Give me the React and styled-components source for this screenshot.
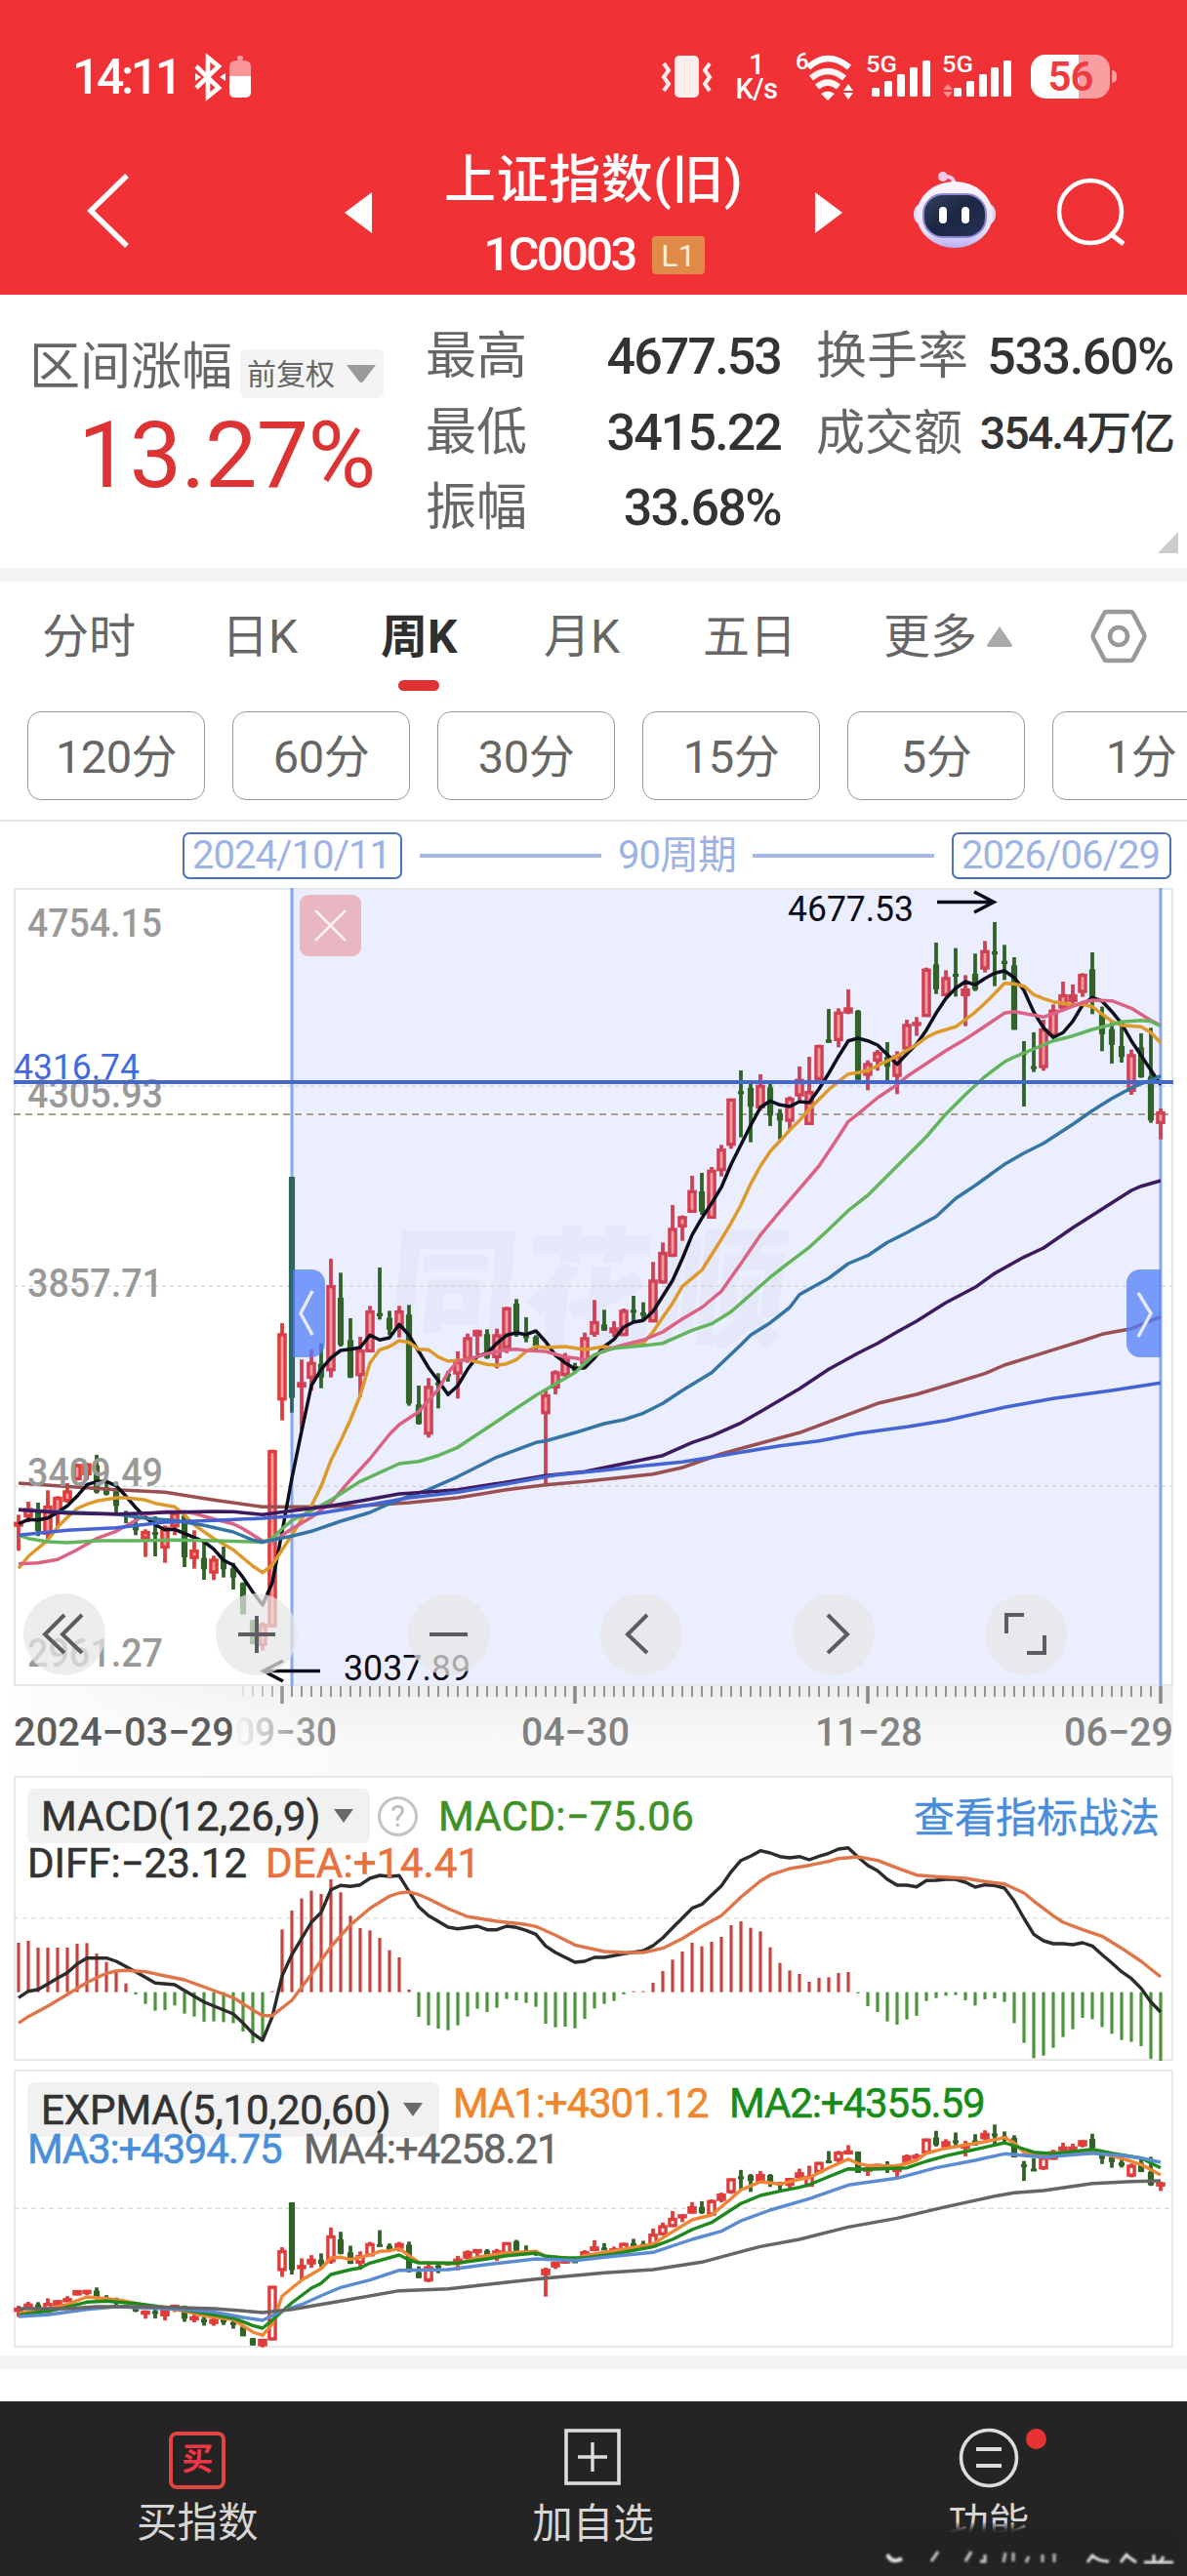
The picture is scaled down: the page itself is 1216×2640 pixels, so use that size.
import React from "react";
import styled, { createGlobalStyle } from "styled-components";

// [up?, high, bodyTop, bodyBottom, low], one row per week, in thirds of a pixel
const CANDLES = [
	[1, 1957, 1980, 1993, 2068], [1, 1917, 1937, 1965, 1980], [0, 1920, 1945, 2007, 2023], [1, 1882, 1930, 2018, 2035],
	[1, 1900, 1903, 1955, 2000], [1, 1860, 1883, 1917, 1920], [1, 1800, 1802, 1850, 1852], [1, 1798, 1800, 1835, 1850],
	[0, 1773, 1805, 1888, 1892], [0, 1850, 1873, 1895, 1898], [0, 1875, 1885, 1930, 1955], [0, 1945, 1950, 1955, 1983],
	[0, 1955, 1985, 2005, 2020], [1, 2002, 2008, 2032, 2087], [0, 1962, 2010, 2016, 2085], [1, 1990, 1995, 2060, 2105],
	[1, 1945, 1950, 1995, 2020], [0, 1955, 1960, 2088, 2118], [1, 2005, 2065, 2092, 2123], [0, 2040, 2090, 2125, 2157],
	[1, 2083, 2093, 2137, 2158], [0, 2055, 2095, 2125, 2150], [0, 2105, 2122, 2150, 2187], [0, 2165, 2167, 2263, 2263],
	[0, 2280, 2282, 2355, 2355], [1, 2288, 2293, 2360, 2375], [1, 1757, 1759, 2302, 2304], [1, 1368, 1400, 1605, 1667],
	[0, 918, 918, 1598, 1643], [1, 1480, 1550, 1565, 1697], [1, 1448, 1488, 1538, 1575], [0, 1430, 1493, 1535, 1568],
	[1, 1170, 1252, 1515, 1535], [0, 1213, 1290, 1435, 1440], [0, 1353, 1420, 1535, 1537], [1, 1410, 1450, 1530, 1595],
	[1, 1315, 1330, 1457, 1457], [0, 1197, 1337, 1347, 1357], [0, 1330, 1352, 1388, 1405], [1, 1315, 1330, 1380, 1412],
	[0, 1312, 1342, 1615, 1622], [0, 1560, 1618, 1678, 1680], [1, 1537, 1562, 1710, 1720], [0, 1522, 1550, 1556, 1630],
	[0, 1515, 1523, 1530, 1548], [1, 1455, 1485, 1525, 1600], [1, 1400, 1412, 1480, 1490], [1, 1388, 1390, 1408, 1464],
	[0, 1387, 1402, 1475, 1478], [1, 1385, 1403, 1475, 1507], [1, 1318, 1320, 1445, 1460], [0, 1294, 1308, 1403, 1410],
	[0, 1350, 1405, 1412, 1427], [0, 1405, 1410, 1437, 1455], [1, 1573, 1588, 1647, 1865], [1, 1513, 1517, 1568, 1587],
	[1, 1460, 1472, 1530, 1532], [0, 1490, 1500, 1515, 1520], [1, 1397, 1412, 1493, 1495], [1, 1297, 1363, 1403, 1410],
	[0, 1327, 1372, 1391, 1391], [1, 1362, 1382, 1398, 1410], [1, 1323, 1328, 1407, 1407], [0, 1284, 1327, 1333, 1362],
	[0, 1304, 1335, 1345, 1358], [1, 1180, 1235, 1365, 1365], [1, 1120, 1150, 1245, 1247], [1, 1005, 1076, 1163, 1165],
	[1, 1037, 1040, 1073, 1115], [1, 915, 960, 1028, 1028], [0, 906, 963, 1025, 1035], [1, 888, 897, 1046, 1046],
	[1, 820, 832, 900, 917], [1, 678, 678, 822, 832], [0, 591, 655, 664, 797], [0, 633, 645, 703, 812],
	[1, 603, 636, 707, 715], [0, 633, 643, 730, 762], [0, 710, 722, 745, 803], [1, 671, 676, 748, 772],
	[1, 579, 618, 670, 683], [1, 549, 655, 758, 758], [1, 512, 514, 620, 628], [0, 402, 496, 506, 506],
	[1, 400, 411, 500, 520], [1, 342, 398, 415, 418], [0, 405, 408, 620, 620], [1, 560, 569, 607, 652],
	[1, 528, 535, 563, 592], [0, 504, 550, 580, 622], [1, 532, 545, 610, 664], [1, 435, 449, 526, 530],
	[1, 427, 443, 449, 485], [1, 275, 279, 426, 426], [0, 198, 265, 342, 356], [1, 283, 305, 362, 362],
	[0, 215, 294, 300, 364], [1, 298, 340, 362, 455], [0, 232, 294, 343, 347], [1, 193, 222, 280, 290],
	[0, 135, 225, 235, 332], [0, 205, 254, 264, 313], [0, 243, 268, 466, 466], [0, 501, 534, 543, 702],
	[0, 474, 578, 584, 596], [1, 435, 463, 583, 592], [1, 388, 405, 485, 490], [1, 318, 358, 400, 405],
	[1, 327, 358, 380, 385], [1, 292, 295, 352, 365], [0, 228, 280, 375, 418], [0, 395, 418, 480, 532],
	[0, 440, 464, 512, 570], [0, 440, 516, 550, 567], [1, 527, 542, 656, 666], [0, 477, 520, 612, 614],
	[0, 460, 610, 745, 752], [1, 708, 718, 755, 803],
];

// "week,value" pairs
const MA_LINES = [
	{ color: "#9a4f50", pts: "0,1860 4,1868 10,1880 15,1888 20,1912 25,1933 30,1933 35,1930 40,1920 45,1905 50,1880 54,1865 58,1855 62,1842 65,1832 68,1812 72,1770 75,1745 80,1705 84,1660 88,1615 92,1587 95,1560 99,1523 101,1497 106,1450 109,1422 111,1402 114,1385 117,1348" },
	{ color: "#0d0f1e", pts: "0,1985 1,1972 2,1973 3,1967 4,1950 5,1930 6,1900 7,1865 8,1855 9,1855 10,1868 11,1900 12,1935 13,1965 14,1988 15,2003 16,2002 17,2015 18,2027 19,2040 20,2063 21,2097 22,2112 23,2150 24,2195 25,2235 26,2165 27,2010 28,1845 29,1700 30,1560 31,1510 32,1475 33,1452 34,1448 35,1443 36,1405 37,1420 38,1413 39,1372 40,1405 41,1455 42,1505 43,1545 44,1588 45,1560 46,1510 47,1470 48,1460 49,1430 50,1405 51,1398 52,1403 53,1392 54,1425 55,1467 56,1490 57,1508 58,1505 59,1475 60,1440 61,1418 62,1380 63,1365 64,1360 65,1332 66,1285 67,1237 68,1170 69,1097 70,1045 71,1000 72,950 73,880 74,820 75,760 76,705 77,685 78,697 79,702 80,687 81,690 82,648 83,600 84,548 85,500 86,492 87,500 88,513 89,542 90,572 91,540 92,510 93,467 94,415 95,370 96,338 97,318 98,328 99,308 100,292 101,285 102,305 103,345 104,412 105,460 106,490 107,475 108,440 109,390 110,367 111,378 112,410 113,447 114,500 115,545 116,590 117,635" },
	{ color: "#dd9a2b", pts: "0,2122 1,2085 3,2035 4,1995 5,1965 6,1938 7,1925 8,1915 10,1905 11,1905 13,1912 14,1922 16,1933 17,1958 18,1988 20,2030 22,2065 24,2115 25,2135 26,2112 27,2065 28,2020 29,1970 30,1930 31,1870 32,1790 33,1730 34,1665 35,1590 36,1490 37,1450 38,1440 39,1422 40,1427 41,1448 42,1450 43,1472 44,1485 46,1480 48,1495 49,1498 50,1493 51,1480 52,1455 53,1440 54,1443 56,1440 58,1450 60,1440 61,1445 63,1435 64,1430 65,1395 66,1350 67,1307 68,1255 70,1205 72,1110 73,1060 74,1005 75,940 76,885 77,840 78,808 79,775 80,745 81,710 82,680 83,650 84,625 85,602 86,598 87,592 88,577 90,547 92,512 93,490 94,475 96,457 98,412 99,385 100,355 101,323 102,325 103,332 104,358 105,370 106,380 107,385 108,390 109,388 110,395 111,418 112,440 113,452 115,457 116,475 117,506" },
	{ color: "#dc6284", pts: "0,2108 2,2105 4,2095 6,2065 8,2030 10,2008 12,1975 13,1955 15,1948 17,1948 18,1953 20,1970 22,1985 23,2000 25,2038 26,2040 28,2000 30,1965 32,1920 34,1850 36,1785 38,1710 39,1680 41,1640 42,1605 43,1572 44,1520 45,1485 46,1480 48,1462 50,1450 51,1448 52,1452 54,1455 56,1472 57,1475 58,1482 60,1452 62,1435 64,1420 66,1395 68,1355 70,1320 72,1270 74,1185 76,1097 78,1025 80,955 82,885 84,795 85,748 86,725 88,675 90,635 91,610 93,570 95,530 97,495 99,455 101,415 102,410 105,427 107,405 109,382 110,375 112,377 114,400 116,437 117,452" },
	{ color: "#62b55c", pts: "0,2020 1,2030 3,2040 5,2043 8,2037 12,2037 16,2035 20,2037 24,2040 25,2042 26,2030 27,2000 28,1975 30,1945 32,1912 35,1855 39,1800 41,1793 43,1775 45,1750 47,1710 49,1670 51,1630 53,1590 54,1573 55,1555 57,1520 59,1465 61,1445 64,1437 66,1430 69,1390 71,1370 73,1333 75,1280 77,1227 79,1180 81,1135 83,1080 85,1022 87,975 89,915 91,855 93,795 95,725 97,665 99,610 101,565 102,550 104,525 106,500 108,485 110,465 112,450 113,442 115,437 116,440 117,455" },
	{ color: "#3575a6", pts: "0,1942 4,1948 10,1955 13,1968 16,1975 19,1990 22,2010 24,2035 25,2041 26,2035 28,2023 30,2008 33,1977 36,1950 38,1923 40,1900 42,1880 45,1840 49,1780 53,1735 54,1730 57,1705 60,1677 62,1665 64,1645 66,1615 68,1575 71,1520 74,1435 75,1405 77,1367 79,1320 80,1280 83,1230 85,1185 87,1160 89,1120 91,1090 94,1040 96,985 98,945 101,880 103,845 105,815 108,757 110,715 112,677 114,645 115,632 116,622 117,608" },
	{ color: "#3d1a60", pts: "0,1942 5,1952 10,1955 15,1950 20,1947 22,1948 25,1957 28,1945 32,1930 35,1915 39,1893 42,1887 45,1880 50,1857 54,1837 58,1825 62,1800 66,1775 69,1735 71,1715 74,1675 76,1640 78,1605 80,1570 83,1510 86,1460 88,1430 90,1395 92,1362 95,1305 98,1258 100,1215 103,1165 105,1137 108,1075 112,998 114,960 115,947 117,930" },
	{ color: "#4364d2", pts: "0,2020 5,2005 10,1997 15,1980 20,1975 25,1968 30,1957 34,1937 40,1905 45,1888 50,1862 55,1835 60,1820 64,1807 68,1795 72,1775 78,1745 82,1730 86,1707 91,1687 95,1667 101,1627 106,1600 112,1575 117,1552" },
];

const MACD_BARS = [
	543, 537, 558, 558, 558, 558, 546, 544, 576, 602, 633, 668, 702, 731, 752, 750, 736, 761, 770, 786, 785, 787, 790, 816, 852, 840, 692, 502,
	444, 407, 383, 393, 348, 388, 460, 498, 505, 528, 566, 588, 687, 771, 797, 807, 812, 797, 770, 746, 756, 743, 716, 720, 728, 740, 792, 803,
	801, 806, 777, 745, 731, 722, 702, 692, 692, 666, 630, 595, 570, 543, 554, 540, 525, 489, 477, 497, 508, 557, 605, 628, 639, 663, 651, 649,
	636, 633, 699, 738, 756, 785, 795, 779, 768, 722, 713, 706, 704, 720, 736, 717, 714, 725, 790, 851, 898, 890, 866, 833, 809, 774, 778, 802,
	823, 842, 848, 861, 900, 906,
];
const MACD_LINES = [
	{ color: "#2c2c2c", pts: "0,712 1,692 2,687 3,670 4,652 5,635 6,608 7,590 9,590 10,600 12,632 14,667 16,672 17,690 19,725 22,762 23,790 24,822 25,843 26,770 27,645 28,580 29,530 30,480 31,450 32,380 33,367 34,370 35,365 36,345 37,336 38,339 39,337 40,385 41,433 42,460 44,495 45,500 47,492 48,503 49,503 50,492 51,496 52,505 53,517 54,553 55,573 57,603 58,600 59,588 60,588 62,577 63,572 64,568 65,552 66,528 67,497 68,467 69,437 70,425 71,397 72,368 73,325 74,290 75,277 76,260 77,267 78,278 79,282 80,278 81,288 82,277 83,268 84,255 85,251 86,280 87,305 88,322 89,348 90,366 91,366 92,371 93,352 94,351 95,348 96,348 97,357 98,372 99,365 100,367 101,375 102,415 103,468 104,517 105,537 106,546 107,546 108,549 109,543 110,553 111,580 112,605 113,632 114,653 115,683 116,725 117,756" },
	{ color: "#e0754a", pts: "0,790 1,770 3,738 5,702 7,665 9,637 10,630 11,628 13,632 15,645 17,657 20,690 22,712 24,750 25,767 26,767 28,720 30,640 32,555 34,488 36,437 38,400 39,390 40,387 41,395 42,408 44,438 46,463 49,477 52,487 53,493 55,520 57,550 60,570 62,573 64,573 66,560 68,530 70,493 72,460 74,403 76,353 77,335 79,315 81,305 83,293 84,284 86,279 88,290 90,313 92,335 94,340 97,345 99,355 101,362 103,390 104,415 106,460 107,480 109,503 111,523 113,560 115,600 117,648" },
];

const EXPMA_LINES = [
	{ color: "#f08536", pts: "0,783 2,775 5,755 7,732 9,737 11,745 14,763 17,775 19,790 22,802 24,840 25,850 26,815 27,730 29,680 31,645 32,612 33,610 34,617 36,603 37,592 38,590 39,583 40,605 41,626 45,630 47,610 50,597 53,592 54,607 57,616 58,605 61,590 65,570 66,550 69,495 71,480 73,430 74,403 76,378 78,385 80,370 81,365 83,335 85,308 86,322 87,328 90,330 92,312 93,290 95,275 97,265 99,255 101,242 102,258 103,288 104,292 107,292 110,287 112,298 114,315 115,325 117,357" },
	{ color: "#1e8a1e", pts: "0,788 4,770 7,748 9,745 12,752 17,772 22,797 24,820 25,828 26,803 28,750 30,705 31,690 32,663 34,648 35,643 36,628 39,603 40,618 41,627 45,628 48,615 50,605 53,597 54,607 56,612 58,612 61,600 65,578 67,555 69,525 71,503 74,445 76,420 78,407 80,395 81,387 83,362 85,338 87,340 91,335 93,315 95,298 97,285 99,272 101,258 104,287 106,292 108,285 110,278 112,290 115,305 116,320 117,335" },
	{ color: "#5b8cd2", pts: "0,792 3,787 7,770 10,762 17,770 20,778 23,795 25,804 27,775 29,755 31,728 33,703 36,680 39,650 44,648 48,632 53,615 57,620 60,610 65,595 69,555 72,530 74,498 77,465 81,430 85,388 90,367 94,335 98,312 101,292 105,302 110,290 113,297 115,305 117,318" },
	{ color: "#666666", pts: "0,768 5,768 8,762 13,762 20,768 23,775 25,780 28,770 33,745 39,713 44,707 50,687 53,677 60,658 65,648 70,625 76,577 80,555 85,517 90,490 95,455 100,422 102,412 105,405 110,383 114,377 117,375" },
];

const PLOT_LEFT = 14;
const weekX = (i) => 19 - PLOT_LEFT + i * 10;
const third = (top) => (v) => (v - top) / 3;
const mainY = third(30);
const macdY = third(30);
const expmaY = third(33);
const smallCandleY = (v) => 56.3 + (v / 3 - 45) * 0.3059;

const toPoints = (pts, y) =>
	pts
		.split(" ")
		.map((p) => {
			const [i, v] = p.split(",").map(Number);
			return `${weekX(i)},${y(v).toFixed(1)}`;
		})
		.join(" ");

const Lines = ({ lines, y, width = 3.4 }) =>
	lines.map((l) => (
		<polyline key={l.color} points={toPoints(l.pts, y)} fill="none" stroke={l.color} strokeWidth={width} strokeLinejoin="round" />
	));

const Candles = ({ y, inner, small }) =>
	CANDLES.map(([up, hi, top, bottom, lo], i) => {
		const x = weekX(i);
		const h = Math.max(y(bottom) - y(top), 3);
		const red = !small && i > 27 ? "#cf4256" : "#df3c3c";
		if (!up) {
			return (
				<g key={i} fill={i === 28 && !small ? "#2f6660" : "#316329"}>
					<rect x={x - 1.9} y={y(hi)} width={3.8} height={y(lo) - y(hi)} />
					<rect x={x - 3.1} y={y(top)} width={6.2} height={h} />
				</g>
			);
		}
		return (
			<g key={i}>
				<rect x={x - 1.9} y={y(hi)} width={3.8} height={y(lo) - y(hi)} fill={red} />
				<rect
					x={x - 3.1}
					y={y(top) + 1.3}
					width={6.2}
					height={Math.max(h - 2.6, 1)}
					fill={h < 8 ? red : inner}
					stroke={red}
					strokeWidth={3.4}
				/>
			</g>
		);
	});

const Label = ({ x, y, w, size = 41, color = "#999", weight = 500, children }) => (
	<text x={x - PLOT_LEFT} y={y} textLength={w} lengthAdjust="spacingAndGlyphs" fontSize={size} fill={color} fontWeight={weight}>
		{children}
	</text>
);

function MainChart() {
	return (
		<ChartBox $height={818}>
			<Plot viewBox="0 0 1188 818">
				<rect x={285} y={0} width={890} height={818} fill="#ebeefe" />
				<text
					x={386}
					y={457}
					fontSize={134}
					fontWeight={900}
					textLength={409}
					fill="#e4e8f8"
					transform="skewX(-5) translate(34 3)"
				>
					同花顺
				</text>
				<g stroke="#c9cdd4" strokeWidth={1.4} strokeDasharray="4 4">
					<path d="M0 203.3H1188M0 408.3H1188M0 613.3H1188" opacity={0.75} />
				</g>
				<rect x={1} y={1} width={1186} height={816} fill="none" stroke="#e3e8ec" strokeWidth={2} />
				<Label x={28} y={50} w={138}>4754.15</Label>
				<path d="M0 232H1188" stroke="#a8a088" strokeWidth={1.8} strokeDasharray="7 5" />
				<path d="M285 0V818M1175 0V818" stroke="#86a6ef" strokeWidth={3} />
				<Candles y={mainY} inner="#f29a9f" />
				<Lines lines={MA_LINES} y={mainY} width={3.5} />
				<Label x={28} y={225} w={139}>4305.93</Label>
				<Label x={28} y={419} w={139}>3857.71</Label>
				<Label x={28} y={613} w={139}>3409.49</Label>
				<Label x={28} y={798} w={139}>2961.27</Label>
				<path d="M0 199H1188" stroke="#4367cd" strokeWidth={4} />
				<Label x={14} y={196} w={129} size={37} color="#4169e0" weight={400}>4316.74</Label>
				<Label x={807} y={34} w={129} size={36} color="#0c0d18" weight={400}>4677.53</Label>
				<path d="M946 14.5H1004M984 4l20 10.5L984 25" fill="none" stroke="#0c0d18" strokeWidth={3.6} />
				<Label x={352} y={812} w={130} size={36} color="#0c0d18" weight={400}>3037.89</Label>
				<path d="M314 802.5H258M276 792l-20 10.5L276 813" fill="none" stroke="#0c0d18" strokeWidth={3.6} />
			</Plot>
			<CloseButton>
				<svg width="63" height="63" viewBox="0 0 63 63">
					<path d="M16 16L47 47M47 16L16 47" stroke="#fff4f0" strokeWidth="2.6" />
				</svg>
			</CloseButton>
			<Handle $left={286}>
				<svg width="33" height="90" viewBox="0 0 33 90">
					<path d="M20 22L8 45L20 67" fill="none" stroke="#e6ecff" strokeWidth="3.4" />
				</svg>
			</Handle>
			<Handle $left={1140} $flip>
				<svg width="35" height="90" viewBox="0 0 35 90">
					<path d="M12 24L25 45L12 69" fill="none" stroke="#e6ecff" strokeWidth="3.4" />
				</svg>
			</Handle>
			<Controls>
				{CONTROLS.map((d) => (
					<RoundButton key={d}>
						<svg width="84" height="84" viewBox="0 0 84 84">
							<path d={d} fill="none" stroke="#5c5d60" strokeWidth="4" />
						</svg>
					</RoundButton>
				))}
			</Controls>
		</ChartBox>
	);
}

const CONTROLS = [
	"M42 22L22 42L42 61M60 22L40 42L60 61",
	"M23 42H61M42 23V61",
	"M22 42H61",
	"M48 22L28 42L48 61",
	"M36 22L56 42L36 61",
	"M40 22H22V41M43 61H61V43",
];

function TimeAxis() {
	const ticks = [];
	for (let i = 23; i <= 117; i++) {
		const major = i % 30 === 27;
		ticks.push(
			<rect
				key={i}
				x={weekX(i) - (major ? 1.8 : 0.9)}
				y={0}
				width={major ? 3.6 : 1.8}
				height={major ? 18 : 11}
				fill="#8b8b8b"
				opacity={i < 28 ? 0.2 + (i - 23) * 0.17 : 1}
			/>
		);
	}
	return (
		<Axis>
			<Plot viewBox="0 0 1188 92">
				<defs>
					<linearGradient id="dateFade">
						<stop offset="0" stopColor="#888" stopOpacity="0" />
						<stop offset="0.6" stopColor="#888" stopOpacity="0.8" />
						<stop offset="1" stopColor="#888" />
					</linearGradient>
				</defs>
				{ticks}
				<Label x={14} y={61} w={226} size={40} color="#5c5c5c">2024−03−29</Label>
				<Label x={240} y={61} w={105} size={40} color="url(#dateFade)">09−30</Label>
				<Label x={534} y={61} w={111} size={40} color="#828282">04−30</Label>
				<Label x={835} y={61} w={110} size={40} color="#828282">11−28</Label>
				<Label x={1090} y={61} w={112} size={40} color="#828282">06−29</Label>
			</Plot>
		</Axis>
	);
}

function MacdPanel() {
	const zero = macdY(695);
	return (
		<ChartBox $height={292}>
			<Plot viewBox="0 0 1188 292">
				<rect x={1} y={1} width={1186} height={290} fill="#fff" stroke="#e9e9e9" strokeWidth={2} />
				<path d="M0 145.7H1188" stroke="#e2e2e2" strokeWidth={1.5} strokeDasharray="5 4" />
				{MACD_BARS.map((v, i) => (
					<rect
						key={i}
						x={weekX(i) - 1.6}
						y={Math.min(macdY(v), zero)}
						width={3.2}
						height={Math.max(Math.abs(macdY(v) - zero), 1)}
						fill={v < 695 ? "#c8443f" : "#4b963a"}
					/>
				))}
				<Lines lines={MACD_LINES} y={macdY} />
			</Plot>
			<IndicatorHead $top={13}>
				<IndicatorName $width={351} $spacing={0.3}>
					MACD(12,26,9)
					<Caret />
				</IndicatorName>
				<Help>?</Help>
				<Reading $color="#3f9128" $spacing={0.3}>MACD:−75.06</Reading>
				<GuideLink>查看指标战法</GuideLink>
			</IndicatorHead>
			<IndicatorRow $top={-4}>
				<Reading $color="#333" $spacing={0} $width={244}>DIFF:−23.12</Reading>
				<Reading $color="#e8713f" $spacing={0.2}>DEA:+14.41</Reading>
			</IndicatorRow>
		</ChartBox>
	);
}

function ExpmaPanel() {
	return (
		<ChartBox $height={285}>
			<Plot viewBox="0 0 1188 285">
				<rect x={1} y={1} width={1186} height={283} fill="#fff" stroke="#e9e9e9" strokeWidth={2} />
				<path d="M0 142.3H1188" stroke="#dcdcdc" strokeWidth={1.5} strokeDasharray="5 4" />
				<Candles y={smallCandleY} inner="#fff" small />
				<Lines lines={EXPMA_LINES} y={expmaY} />
			</Plot>
			<IndicatorHead $top={13}>
				<IndicatorName $width={422} $spacing={-0.1}>
					EXPMA(5,10,20,60)
					<Caret />
				</IndicatorName>
				<ReadingPair>
					<Reading $color="#f0862e" $spacing={-1.1} $width={283}>MA1:+4301.12</Reading>
					<Reading $color="#188c18" $spacing={-1.1}>MA2:+4355.59</Reading>
				</ReadingPair>
			</IndicatorHead>
			<IndicatorRow $top={-12}>
				<Reading $color="#4a8fdc" $spacing={-1.2} $width={283}>MA3:+4394.75</Reading>
				<Reading $color="#666" $spacing={-1.1}>MA4:+4258.21</Reading>
			</IndicatorRow>
		</ChartBox>
	);
}

const SignalBars = ({ roaming }) => (
	<svg width="78" height="46" viewBox="0 0 78 46">
		<text x="0" y="18" fontSize="23" fontWeight="500" fill="#fff" textLength="32" lengthAdjust="spacingAndGlyphs">5G</text>
		<g fill="#fff">
			<rect x={roaming ? 12 : 6} y="34" width="8" height="9" rx="1.5" />
			<rect x={roaming ? 25 : 19} y="27" width="8" height="16" rx="1.5" />
			<rect x={roaming ? 38 : 32} y="20" width="8" height="23" rx="1.5" />
			<rect x={roaming ? 50 : 45} y="13" width="8" height="30" rx="1.5" />
			<rect x={roaming ? 63 : 58} y="6" width="8" height="37" rx="1.5" />
		</g>
		{roaming && <path d="M1 36l5-6 5 6zM1 38l5 6 5-6z" fill="#f98a8d" />}
	</svg>
);

function Header() {
	return (
		<RedHeader>
			<StatusBar>
				<Clock>14:11</Clock>
				<svg width="60" height="46" viewBox="0 0 60 46">
					<path d="M2 12L25 34L14 43V3L25 12L2 34" fill="none" stroke="#fff" strokeWidth="4.6" />
					<path d="M1 19l6 4-6 4zM32 19l-6 4 6 4z" fill="#fff" />
					<rect x="44" y="1" width="6" height="5" rx="2" fill="#f99a9c" />
					<path d="M36 22v-9q0-7 7-7h8q7 0 7 7v9z" fill="#f9969a" />
					<path d="M36 22h22v16q0 6-6 6h-10q-6 0-6-6z" fill="#fff" />
				</svg>
				<StatusGap />
				<svg width="54" height="46" viewBox="0 0 54 46">
					<rect x="14" y="1" width="25" height="43" rx="5" fill="#ffecec" />
					<path d="M3 9L8 16L3 23L8 30L3 37M50 9L45 16L50 23L45 30L50 37" fill="none" stroke="#ffecec" strokeWidth="4" />
				</svg>
				<NetSpeed>
					<span>1</span>
					<span>K/s</span>
				</NetSpeed>
				<Wifi width="62" height="50" viewBox="0 0 62 50">
					<text x="0" y="17" fontSize="24" fontWeight="500" fill="#fff">6</text>
					<g fill="none" stroke="#fff" strokeWidth="6.5">
						<path d="M13 15Q33 -3 55 15" />
						<path d="M16 26Q33 12 50 26" opacity="0.95" />
						<path d="M22 35Q33 26 44 35" opacity="0.95" />
					</g>
					<path d="M26 42Q33 37 40 42L33 49z" fill="#fff" />
					<path d="M49 39l5-7 5 7zM49 41l5 7 5-7z" fill="#fff" />
				</Wifi>
				<SignalBars />
				<SignalBars roaming />
				<Battery>
					<span>56</span>
				</Battery>
			</StatusBar>
			<TitleBar>
				<svg width="60" height="90" viewBox="0 0 60 90">
					<path d="M48 10L11 46L48 82" fill="none" stroke="#fff" strokeWidth="5.5" />
				</svg>
				<svg width="28" height="44" viewBox="0 0 28 44">
					<path d="M28 1V43L0 22z" fill="#fff" />
				</svg>
				<Titles>
					<h1>上证指数(旧)</h1>
					<CodeRow>
						1C0003
						<Level>L1</Level>
					</CodeRow>
				</Titles>
				<svg width="28" height="44" viewBox="0 0 28 44">
					<path d="M0 1V43L28 22z" fill="#fff" />
				</svg>
				<svg width="86" height="80" viewBox="0 0 86 80">
					<defs>
						<linearGradient id="shell" x1="0" y1="0" x2="0" y2="1">
							<stop offset="0" stopColor="#fdf6ff" />
							<stop offset="0.75" stopColor="#e6e0fa" />
							<stop offset="1" stopColor="#b9aef0" />
						</linearGradient>
						<linearGradient id="visor" x1="0" y1="0" x2="1" y2="1">
							<stop offset="0" stopColor="#34415c" />
							<stop offset="0.5" stopColor="#1b2742" />
							<stop offset="1" stopColor="#27325a" />
						</linearGradient>
					</defs>
					<circle cx="31" cy="6" r="5" fill="#f3cbe6" />
					<path d="M33 6Q42 5 43 15" fill="none" stroke="#f3cbe6" strokeWidth="4" />
					<rect x="1" y="32" width="84" height="25" rx="12" fill="#dcd6f8" />
					<ellipse cx="43" cy="45" rx="39" ry="34" fill="url(#shell)" />
					<rect x="11" y="24" width="64" height="44" rx="20" fill="url(#visor)" stroke="#8e86d8" strokeWidth="2" />
					<rect x="27" y="37" width="8" height="17" rx="4" fill="#fff" />
					<rect x="50" y="37" width="8" height="17" rx="4" fill="#fff" />
				</svg>
				<svg width="76" height="76" viewBox="0 0 76 76">
					<circle cx="37" cy="38" r="32" fill="none" stroke="#fff" strokeWidth="4.5" />
					<path d="M57 60L71 71" stroke="#fff" strokeWidth="5" />
				</svg>
			</TitleBar>
		</RedHeader>
	);
}

function Summary() {
	return (
		<SummaryBox>
			<Range>
				<RangeHead>
					<StatLabel>区间涨幅</StatLabel>
					<AdjustTag>
						前复权
						<svg width="32" height="20" viewBox="0 0 32 20">
							<path d="M1 1H31L18 18Q16 20 14 18z" fill="#9a9a9a" />
						</svg>
					</AdjustTag>
				</RangeHead>
				<RangeValue>13.27%</RangeValue>
			</Range>
			<Stats $width={364} $left={43}>
				<Stat><StatLabel>最高</StatLabel><StatValue>4677.53</StatValue></Stat>
				<Stat><StatLabel>最低</StatLabel><StatValue>3415.22</StatValue></Stat>
				<Stat><StatLabel>振幅</StatLabel><StatValue $spacing={-1.6}>33.68%</StatValue></Stat>
			</Stats>
			<Stats $width={366} $left={36}>
				<Stat><StatLabel>换手率</StatLabel><StatValue $spacing={-1.4}>533.60%</StatValue></Stat>
				<Stat><StatLabel $size={50}>成交额</StatLabel><StatValue $size={46.5} $spacing={-1.9}>354.4万亿</StatValue></Stat>
			</Stats>
			<Corner />
		</SummaryBox>
	);
}

const TABS = [
	{ name: "分时", width: 184 },
	{ name: "日K", width: 163 },
	{ name: "周K", width: 167, active: true },
	{ name: "月K", width: 163 },
	{ name: "五日", width: 175 },
];
const MINUTES = ["120分", "60分", "30分", "15分", "5分", "1分"];

export default function App() {
	return (
		<Page>
			<GlobalStyle />
			<Header />
			<Summary />
			<Band />
			<Tabs>
				{TABS.map((t) => (
					<Tab key={t.name} $width={t.width} $active={t.active}>
						<span>{t.name}</span>
					</Tab>
				))}
				<More>
					更多
					<svg width="28" height="24" viewBox="0 0 28 24">
						<path d="M14 1L27 20Q27 22 25 22H3Q1 22 1 20z" fill="#aaa" />
					</svg>
				</More>
				<svg width="60" height="60" viewBox="0 0 60 60">
					<path d="M18 5H42Q44 5 45 7L56 28Q57 30 56 32L45 53Q44 55 42 55H18Q16 55 15 53L4 32Q3 30 4 28L15 7Q16 5 18 5z" fill="none" stroke="#999" strokeWidth="4.5" />
					<circle cx="30" cy="30" r="9" fill="none" stroke="#999" strokeWidth="4.5" />
				</svg>
			</Tabs>
			<Chips>
				{MINUTES.map((m) => (
					<Chip key={m}>{m}</Chip>
				))}
			</Chips>
			<PeriodRow>
				<DateBox>2024/10/11</DateBox>
				<Rule />
				<span>90周期</span>
				<Rule />
				<DateBox>2026/06/29</DateBox>
			</PeriodRow>
			<MainChart />
			<TimeAxis />
			<MacdPanel />
			<PanelGap />
			<ExpmaPanel />
			<Band $top={8} />
			<BottomNav>
				<NavItem>
					<BuyIcon>买</BuyIcon>
					<span>买指数</span>
				</NavItem>
				<NavItem>
					<svg width="60" height="64" viewBox="0 0 60 64">
						<rect x="3" y="3" width="54" height="54" fill="none" stroke="#ddd" strokeWidth="3.6" />
						<path d="M15 30H45M30 15V45" stroke="#ddd" strokeWidth="3.4" />
					</svg>
					<span>加自选</span>
				</NavItem>
				<NavItem>
					<svg width="66" height="64" viewBox="0 0 66 64">
						<circle cx="33" cy="31" r="28.5" fill="none" stroke="#ddd" strokeWidth="3.6" />
						<path d="M20 22H46M20 39H46" stroke="#ddd" strokeWidth="4" />
					</svg>
					<span>功能</span>
					<RedDot />
				</NavItem>
				<Smudge>
					<svg width="316" height="64" viewBox="0 0 316 64">
						<defs>
							<filter id="soft">
								<feGaussianBlur stdDeviation="3.5" />
							</filter>
							<filter id="slight">
								<feGaussianBlur stdDeviation="0.8" />
							</filter>
						</defs>
						<rect x="8" y="13" width="306" height="38" fill="#222" filter="url(#soft)" />
						<g fill="none" stroke="#e4e4e4" strokeWidth="3" filter="url(#slight)">
							<path d="M13 42Q18 52 28 46" strokeWidth="4" />
							<path d="M58 49l7-10M93 49l6-10M113 42v7h-5" opacity="0.9" />
							<path d="M132 50l2-10M142 49v-9M158 44l-3 6M172 42v8M184 50v-9" opacity="0.8" />
							<path d="M218 50l5-7q6 6 17 6M252 50l7-9M258 43l10 7M276 50h30M286 42v8M296 44l-3 5" />
						</g>
					</svg>
				</Smudge>
			</BottomNav>
		</Page>
	);
}

const GlobalStyle = createGlobalStyle`
	* {
		box-sizing: border-box;
	}
	body {
		margin: 0;
		background: #fff;
		font-family: Roboto, "Noto Sans CJK SC", sans-serif;
	}
	svg {
		display: block;
		flex-shrink: 0;
		overflow: visible;
	}
`;

const Page = styled.div`
	width: 1216px;
	height: 2640px;
	overflow: hidden;
	display: flex;
	flex-direction: column;
	background: #fff;
`;

const RedHeader = styled.header`
	height: 302px;
	flex-shrink: 0;
	background: #f03135;
	color: #fff;
`;

const StatusBar = styled.div`
	height: 157px;
	padding: 0 73px 0 74px;
	display: flex;
	align-items: center;
`;

const Clock = styled.div`
	font-size: 50px;
	font-weight: 500;
	letter-spacing: -3.4px;
	width: 125px;
`;

const StatusGap = styled.div`
	flex: 1;
`;

const NetSpeed = styled.div`
	width: 52px;
	margin: 0 14px 0 18px;
	display: flex;
	flex-direction: column;
	align-items: center;
	font-size: 29px;
	line-height: 25px;
	font-weight: 500;
	letter-spacing: -0.5px;
`;

const Wifi = styled.svg`
	margin-right: 10px;
`;

const Battery = styled.div`
	position: relative;
	width: 81px;
	height: 45px;
	margin: 0 6px 0 13px;
	border-radius: 15px;
	background: linear-gradient(90deg, #fff 60%, #f99fa1 60%);
	display: flex;
	align-items: center;
	justify-content: center;
	font-size: 42px;
	font-weight: 600;
	color: #ee3b3f;
	letter-spacing: -1px;

	&::after {
		content: "";
		position: absolute;
		right: -7px;
		top: 16px;
		width: 5px;
		height: 13px;
		border-radius: 0 5px 5px 0;
		background: #f99fa1;
	}
`;

const TitleBar = styled.div`
	height: 145px;
	padding-left: 82px;
	display: flex;
	align-items: center;

	> svg:nth-of-type(1) {
		margin: -30px 211px 0 0;
	}
	> svg:nth-of-type(2),
	> svg:nth-of-type(3) {
		margin-top: -23px;
	}
	> svg:nth-of-type(4) {
		margin: -30px 0 0 72px;
	}
	> svg:nth-of-type(5) {
		margin: -26px 0 0 59px;
	}
`;

const Titles = styled.div`
	width: 454px;
	height: 145px;
	display: flex;
	flex-direction: column;
	align-items: center;

	h1 {
		margin: -6px 0 0;
		font-size: 53px;
		line-height: 68px;
		font-weight: 500;
		letter-spacing: 0.6px;
	}
`;

const CodeRow = styled.div`
	display: flex;
	align-items: center;
	gap: 17px;
	margin-top: 14px;
	padding-left: 1px;
	font-size: 49px;
	line-height: 56px;
	font-weight: 500;
	letter-spacing: -2.6px;
`;

const Level = styled.span`
	width: 54px;
	height: 39px;
	border-radius: 4px;
	background: #e08c48;
	color: #fbeed8;
	font-size: 32px;
	font-weight: 400;
	line-height: 40px;
	letter-spacing: 0;
	text-align: center;
`;

const SummaryBox = styled.section`
	position: relative;
	height: 280px;
	flex-shrink: 0;
	display: flex;
`;

const Range = styled.div`
	width: 393px;
	padding: 44px 0 0 30px;
`;

const RangeHead = styled.div`
	display: flex;
	align-items: flex-start;
	height: 66px;
`;

const StatLabel = styled.span`
	font-size: ${(p) => p.$size || 52}px;
	line-height: 62px;
	color: #666;
	white-space: nowrap;
`;

const AdjustTag = styled.span`
	flex-shrink: 0;
	width: 147px;
	height: 50px;
	margin: 12px 0 0 8px;
	padding: 0 0 4px 7px;
	display: flex;
	align-items: center;
	gap: 11px;
	border-radius: 6px;
	background: #f4f4f4;
	color: #666;
	font-size: 30px;

	svg {
		margin-top: 4px;
	}
`;

const RangeValue = styled.div`
	padding-left: 50px;
	font-size: 95px;
	line-height: 110px;
	letter-spacing: -0.6px;
	color: #dc3434;
`;

const Stats = styled.div`
	width: ${(p) => p.$width}px;
	margin-left: ${(p) => p.$left}px;
	padding-top: 33px;
	display: flex;
	flex-direction: column;
	gap: 15.5px;
`;

const Stat = styled.div`
	display: flex;
	justify-content: space-between;
	align-items: center;
	height: 62px;
`;

const StatValue = styled.span`
	font-size: ${(p) => p.$size || 52}px;
	line-height: 62px;
	font-weight: 500;
	letter-spacing: ${(p) => p.$spacing || -1.9}px;
	color: #333;
	white-space: nowrap;
`;

const Corner = styled.i`
	position: absolute;
	right: 9px;
	bottom: 15px;
	border-bottom: 22px solid #ccc;
	border-left: 21px solid transparent;
`;

const Band = styled.div`
	height: 14px;
	flex-shrink: 0;
	margin-top: ${(p) => p.$top || 0}px;
	background: #f4f4f4;
`;

const Tabs = styled.nav`
	height: 133px;
	flex-shrink: 0;
	padding: 26px 0 0 43px;
	display: flex;
	align-items: flex-start;
	color: #666;
	font-size: 48px;
	line-height: 62px;
`;

const Tab = styled.div`
	width: ${(p) => p.$width}px;
	color: ${(p) => (p.$active ? "#2f2f2f" : "#666")};
	font-weight: ${(p) => (p.$active ? 700 : 400)};

	span {
		display: inline-flex;
		flex-direction: column;
		align-items: center;
	}
	span::after {
		content: "";
		width: 42px;
		height: 11px;
		margin-top: 13px;
		border-radius: 6px;
		background: ${(p) => (p.$active ? "#dd3333" : "transparent")};
	}
`;

const More = styled.div`
	width: 221px;
	padding-left: 10px;
	display: flex;
	align-items: center;
	gap: 9px;
`;

const Chips = styled.div`
	height: 113px;
	flex-shrink: 0;
	padding-left: 28px;
	display: flex;
	gap: 28px;
	border-bottom: 2px solid #e2e2e2;
`;

const Chip = styled.button`
	flex-shrink: 0;
	width: 182px;
	height: 91px;
	padding: 0 0 6px;
	border: 1.5px solid #999;
	border-radius: 14px;
	background: #fff;
	color: #666;
	font: inherit;
	font-size: 47px;
	letter-spacing: -0.5px;
`;

const PeriodRow = styled.div`
	height: 68px;
	flex-shrink: 0;
	padding: 11px 16px 0 187px;
	display: flex;
	justify-content: space-between;
	align-items: flex-start;
	color: #9db3e4;
	font-size: 40px;
	line-height: 48px;
	letter-spacing: -1px;
`;

const DateBox = styled.span`
	width: 225px;
	height: 48px;
	padding-right: 2px;
	border: 2.5px solid #4a72bd;
	border-radius: 7px;
	line-height: 44px;
	text-align: center;
`;

const Rule = styled.i`
	width: 186px;
	height: 4px;
	margin-top: 22px;
	background: #a3b8e4;
`;

const ChartBox = styled.section`
	position: relative;
	width: 1188px;
	height: ${(p) => p.$height}px;
	flex-shrink: 0;
	margin-left: ${PLOT_LEFT}px;
	display: flex;
	flex-direction: column;
`;

const Plot = styled.svg`
	position: absolute;
	left: 0;
	top: 0;
	width: 100%;
	height: 100%;
`;

const CloseButton = styled.button`
	position: absolute;
	left: 293px;
	top: 7px;
	padding: 0;
	border: 0;
	border-radius: 9px;
	background: #e9b6c1;
`;

const Handle = styled.div`
	position: absolute;
	left: ${(p) => p.$left}px;
	top: 391px;
	border-radius: ${(p) => (p.$flip ? "14px 0 0 14px" : "0 14px 14px 0")};
	background: rgba(84, 128, 250, 0.76);
`;

const Controls = styled.div`
	position: absolute;
	left: 10px;
	bottom: 11px;
	display: flex;
	gap: 113px;
`;

const RoundButton = styled.button`
	padding: 0;
	border: 0;
	border-radius: 50%;
	background: rgba(230, 230, 230, 0.72);
`;

const Axis = styled.div`
	position: relative;
	width: 1188px;
	height: 92px;
	flex-shrink: 0;
	margin-left: ${PLOT_LEFT}px;
	background: linear-gradient(90deg, #fdfdfd, rgba(253, 253, 253, 0) 30%), linear-gradient(#eeeeee, #fafafa 70%);
`;

const IndicatorHead = styled.div`
	position: relative;
	margin: ${(p) => p.$top}px 14px 0;
	height: 56px;
	display: flex;
	align-items: center;
	font-size: 42px;
	white-space: nowrap;
`;

const IndicatorName = styled.button`
	width: ${(p) => p.$width}px;
	height: 56px;
	padding: 0 17px 0 14px;
	border: 0;
	border-radius: 7px;
	background: #f1f1f1;
	color: #333;
	font: inherit;
	letter-spacing: ${(p) => p.$spacing}px;
	display: flex;
	align-items: center;
	justify-content: space-between;
	-webkit-text-stroke: 0.6px currentColor;
`;

const Caret = styled.i`
	border-top: 14px solid #6a6a6a;
	border-left: 10.5px solid transparent;
	border-right: 10.5px solid transparent;
`;

const Help = styled.span`
	width: 41px;
	height: 41px;
	margin: 0 21px 0 8px;
	border: 3px solid #c4c4c4;
	border-radius: 50%;
	color: #bbb;
	font-size: 31px;
	line-height: 36px;
	text-align: center;
`;

const Reading = styled.span`
	color: ${(p) => p.$color};
	width: ${(p) => (p.$width ? p.$width + "px" : "auto")};
	letter-spacing: ${(p) => p.$spacing}px;
	-webkit-text-stroke: 0.6px currentColor;
`;

const ReadingPair = styled.div`
	display: flex;
	margin: -14px 0 0 14px;
`;

const GuideLink = styled.a`
	margin: -4px 0 0 auto;
	color: #4a8edb;
	font-size: 42px;
	-webkit-text-stroke: 0.4px currentColor;
`;

const IndicatorRow = styled.div`
	position: relative;
	margin: ${(p) => p.$top}px 14px 0;
	display: flex;
	font-size: 42px;
	line-height: 50px;
`;

const PanelGap = styled.div`
	height: 9px;
	flex-shrink: 0;
`;

const BottomNav = styled.footer`
	position: relative;
	height: 179px;
	flex-shrink: 0;
	margin-top: 33px;
	padding-top: 27px;
	display: grid;
	grid-template-columns: repeat(3, 1fr);
	background: #242424;
`;

const NavItem = styled.div`
	position: relative;
	padding-right: 1px;
	display: flex;
	flex-direction: column;
	align-items: center;
	color: #d6d6d6;
	font-size: 41.5px;
	line-height: 62px;

	span:not(:first-child) {
		margin-top: 4px;
	}
`;

const BuyIcon = styled.span`
	width: 58px;
	height: 59px;
	margin: 4px 0 0;
	border: 4.5px solid #e04544;
	border-radius: 8px;
	color: #f03544;
	font-size: 32px;
	font-weight: 700;
	line-height: 48px;
	text-align: center;
`;

const RedDot = styled.i`
	position: absolute;
	left: 240px;
	top: 1px;
	width: 21px;
	height: 21px;
	border-radius: 50%;
	background: #e63232;
`;

const Smudge = styled.div`
	position: absolute;
	right: 4px;
	bottom: 0;
`;
